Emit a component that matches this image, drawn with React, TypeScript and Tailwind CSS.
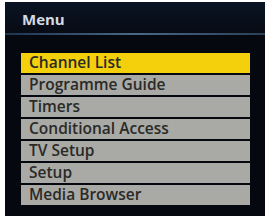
const items = [
  "Channel List",
  "Programme Guide",
  "Timers",
  "Conditional Access",
  "TV Setup",
  "Setup",
  "Media Browser",
]

export default function App() {
  return (
    <div className="h-[220px] w-[265px] bg-white pl-[5px] pt-[2px]" style={{fontFamily: '"Open Sans", "DejaVu Sans", sans-serif'}}>
      <div className="flex h-[214px] flex-col bg-[#05080f]">
        <div className="flex h-[31px] items-center bg-gradient-to-b from-[#0b1424] to-[#070b14] pl-[17px] pt-[3px] text-[15px] font-bold text-[#d5dae2]">
          Menu
        </div>
        <div className="h-[2px] bg-gradient-to-r from-[#1e3550] via-[#4a6888] to-[#2a4058]" />
        <div className="ml-[16px] mr-[15px] mt-[18px] flex flex-col gap-[2px]">
          {items.map((t, i) => (
            <div
              key={t}
              className={`flex h-[20px] items-center pl-[8px] text-[15.5px] font-semibold leading-none text-[#2a2a26] ${
                i === 0 ? "bg-[#f4cf0c]" : "bg-[#a9a9a6]"
              }`}
            >
              {t}
            </div>
          ))}
        </div>
      </div>
    </div>
  )
}
